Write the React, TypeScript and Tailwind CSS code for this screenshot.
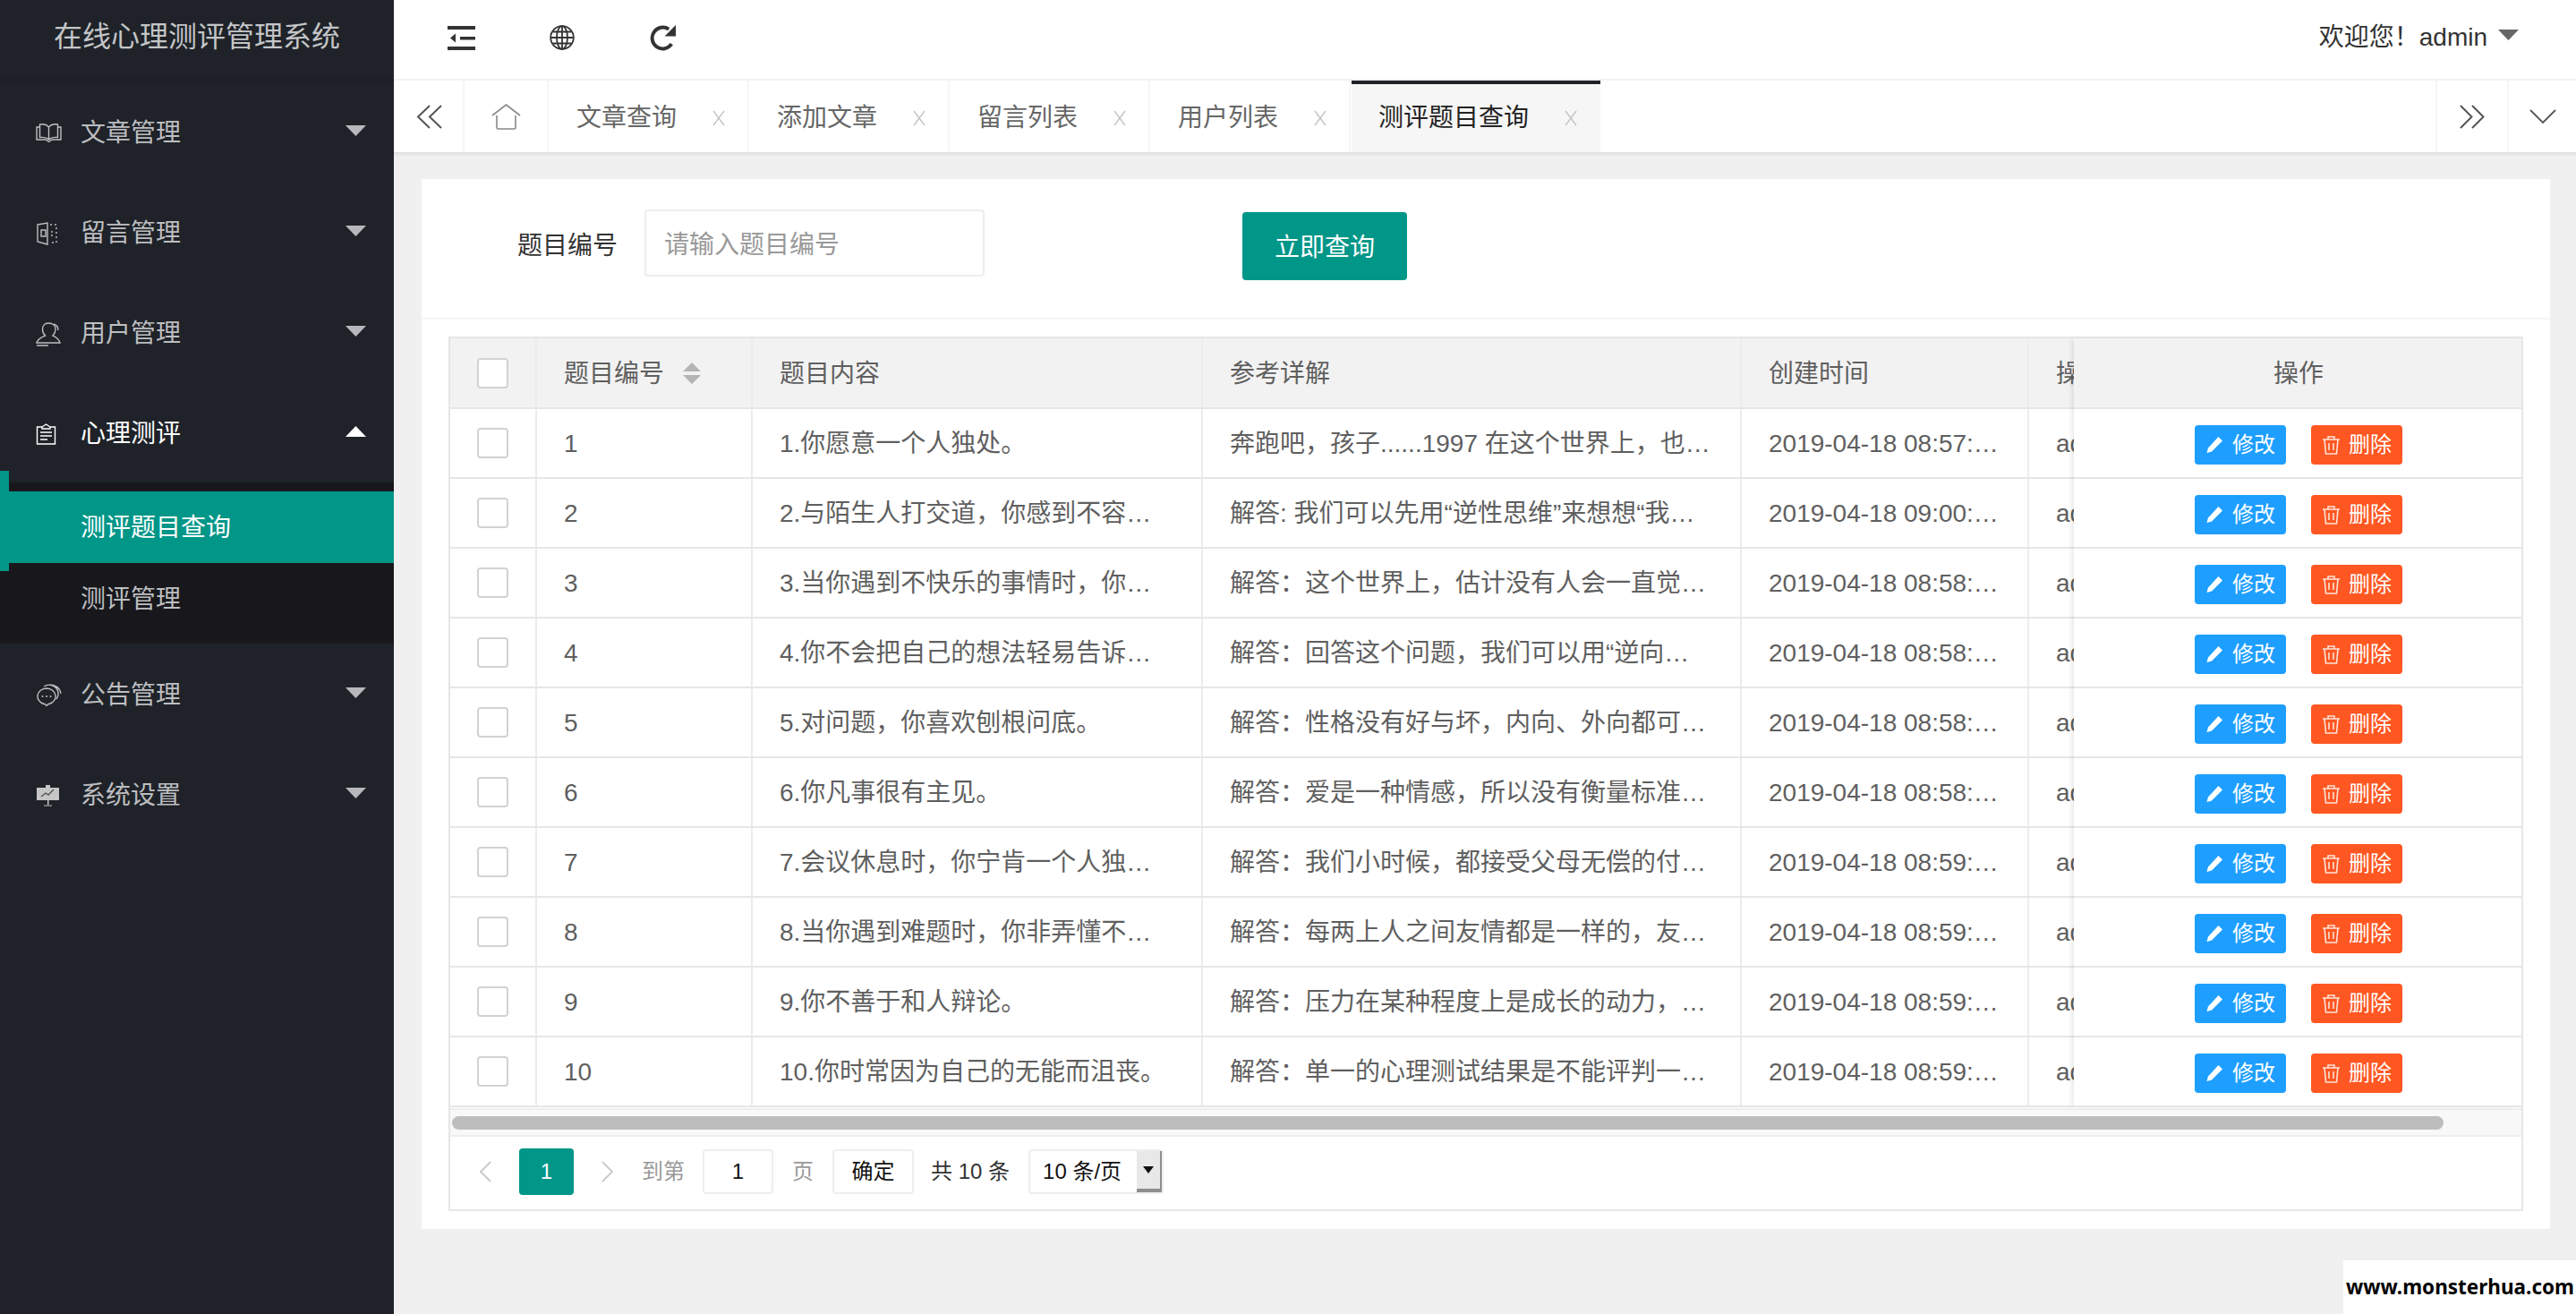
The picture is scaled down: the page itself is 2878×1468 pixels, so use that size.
import type { ReactNode } from "react";

const rows = [
  { id: "1", title: "1.你愿意一个人独处。", detail: "奔跑吧，孩子......1997 在这个世界上，也许我们都曾经迷茫过", time: "2019-04-18 08:57:12" },
  { id: "2", title: "2.与陌生人打交道，你感到不容易吗，请选择", detail: "解答: 我们可以先用“逆性思维”来想想“我们为什么会这样”", time: "2019-04-18 09:00:12" },
  { id: "3", title: "3.当你遇到不快乐的事情时，你会怎么做呢", detail: "解答：这个世界上，估计没有人会一直觉得快乐吧", time: "2019-04-18 08:58:12" },
  { id: "4", title: "4.你不会把自己的想法轻易告诉别人的吧", detail: "解答：回答这个问题，我们可以用“逆向思维”来想一想", time: "2019-04-18 08:58:22" },
  { id: "5", title: "5.对问题，你喜欢刨根问底。", detail: "解答：性格没有好与坏，内向、外向都可以成功的吧", time: "2019-04-18 08:58:32" },
  { id: "6", title: "6.你凡事很有主见。", detail: "解答：爱是一种情感，所以没有衡量标准的，请记住", time: "2019-04-18 08:58:42" },
  { id: "7", title: "7.会议休息时，你宁肯一个人独处也不愿意", detail: "解答：我们小时候，都接受父母无偿的付出和关爱", time: "2019-04-18 08:59:02" },
  { id: "8", title: "8.当你遇到难题时，你非弄懂不可的吧对吗", detail: "解答：每两上人之间友情都是一样的，友情是相互的", time: "2019-04-18 08:59:12" },
  { id: "9", title: "9.你不善于和人辩论。", detail: "解答：压力在某种程度上是成长的动力，所以不要害怕", time: "2019-04-18 08:59:22" },
  { id: "10", title: "10.你时常因为自己的无能而沮丧。", detail: "解答：单一的心理测试结果是不能评判一个人的全部", time: "2019-04-18 08:59:32" },
];

const BookIcon = () => (
  <svg width="29" height="23" viewBox="0 0 29 23" fill="none" stroke="currentColor" strokeWidth="1.4">
    <path d="M14.5 5C12 2 8 1.5 4.5 2v14.5c4-.5 7.5 0 10 2.5 2.500-2.500 6-3 10-2.500V2c-3.500-.5-7.500 0-10 3zM14.500 5v14" />
    <path d="M4.500 5H1v14h10l3.500 2.500L18 19h10V5h-3.500" />
  </svg>
);

const DoorIcon = () => (
  <svg width="25" height="26" viewBox="0 0 25 26" fill="none" stroke="currentColor" strokeWidth="1.4">
    <path d="M2 3l11 -2v24l-11-3z" />
    <path d="M6 9h5v7H6z" />
    <path d="M16 3h7v20h-7" strokeDasharray="2 3" />
    <path d="M18 10v7" strokeDasharray="2 2" />
  </svg>
);

const UserIcon = () => (
  <svg width="29" height="28" viewBox="0 0 29 28" fill="none" stroke="currentColor" strokeWidth="1.4">
    <path d="M14 2c-4 0-6.500 3-6.500 7 0 3 1.500 5.500 3 7-3 1.500-8 3-9.500 8h26c-1.500-5-5-6.500-8-8 1.500-1.500 3-4 3-7 0-4-3-7-8-7z" />
    <path d="M20 3c3 1 5 4 5 7M1 27h13" />
  </svg>
);

const ClipboardIcon = () => (
  <svg width="23" height="24" viewBox="0 0 23 24" fill="none" stroke="currentColor" strokeWidth="1.4">
    <path d="M7 4H1.500v19h20V4H16" />
    <path d="M7 6V4l4.500-3L16 4v2z" />
    <path d="M5 10h13M5 14h13M5 18h8" />
  </svg>
);

const ChatIcon = () => (
  <svg width="29" height="25" viewBox="0 0 29 25" fill="none" stroke="currentColor" strokeWidth="1.4">
    <path d="M12 5a10.500 9 0 0 0-3 17.500h1l2 2 2-2h1A10.500 9 0 0 0 12 5z" />
    <path d="M9 3c6-4 15-1 16 7 .5 3-.5 5-2 7M16 1c5 0 11 3 12 10" />
    <circle cx="7.500" cy="14" r="1" fill="currentColor" stroke="none" />
    <circle cx="12" cy="14" r="1" fill="currentColor" stroke="none" />
    <circle cx="16.500" cy="14" r="1" fill="currentColor" stroke="none" />
  </svg>
);

const BoardIcon = () => (
  <svg width="27" height="25" viewBox="0 0 27 25">
    <path d="M1 4h25v14H1z" fill="#c6c6c6" />
    <path d="M6 14l5-4 3 2 6-6" fill="none" stroke="#555" strokeWidth="1.400" />
    <path d="M11 1h5v3h-5zM13 18h1.500v5H13zM9 23.500h9v1H9z" fill="#c6c6c6" />
  </svg>
);

function Caret({ up, className }: { up?: boolean; className: string }) {
  return (
    <svg width="23" height="12" viewBox="0 0 23 12" className={className}>
      <path d={up ? "M11.500 0L23 12H0z" : "M0 0h23L11.500 12z"} fill="currentColor" />
    </svg>
  );
}

function MenuItem({ icon, label, open }: { icon: ReactNode; label: string; open?: boolean }) {
  return (
    <div className={`flex h-[112px] items-center pl-[40px] pt-[3px] text-[28px] ${open ? "text-white" : "text-[#bdbec0]"}`}>
      <span className="flex w-[50px] items-center">{icon}</span>
      <span>{label}</span>
      <Caret up={open} className={`ml-auto mr-[31px] -mt-[5px] ${open ? "text-white" : "text-[#b8b8bc]"}`} />
    </div>
  );
}

function Sidebar() {
  return (
    <aside className="relative w-[440px] shrink-0 bg-[#1f2329]">
      <div className="flex h-[91px] items-center justify-center border-b-[3px] border-[#1c1f24] pb-[6px] text-[32px] text-[#c4c5c7]">
        在线心理测评管理系统
      </div>
      <MenuItem icon={<BookIcon />} label="文章管理" />
      <MenuItem icon={<DoorIcon />} label="留言管理" />
      <MenuItem icon={<UserIcon />} label="用户管理" />
      <MenuItem icon={<ClipboardIcon />} label="心理测评" open />
      <div className="bg-[#18181c] py-[10px] text-[28px]">
        <div className="flex h-[80px] items-center bg-[#009688] pl-[90px] pt-[2px] text-white">测评题目查询</div>
        <div className="flex h-[80px] items-center pl-[90px] pt-[2px] text-[#bdbec0]">测评管理</div>
      </div>
      <MenuItem icon={<ChatIcon />} label="公告管理" />
      <MenuItem icon={<BoardIcon />} label="系统设置" />
      <div className="absolute left-0 top-[526px] h-[112px] w-[10px] bg-[#009688]" />
    </aside>
  );
}

function TopBar() {
  return (
    <header className="flex h-[90px] shrink-0 items-center border-b-2 border-[#f2f2f2] bg-white pb-[4px] pl-[60px] pr-[64px] text-[#333]">
      <svg width="32" height="27" viewBox="0 0 32 27" fill="#333">
        <rect x="0" y="0" width="31" height="4" />
        <rect x="14" y="12" width="17" height="3.500" />
        <rect x="0" y="23" width="31" height="4" />
        <path d="M9 8.500v10l-6-5z" />
      </svg>
      <svg className="ml-[82px]" width="28" height="28" viewBox="0 0 28 28" fill="none" stroke="#333" strokeWidth="1.800">
        <circle cx="14" cy="14" r="12.800" />
        <ellipse cx="14" cy="14" rx="6" ry="12.800" />
        <path d="M14 1v26M1.500 14h25M3.500 7.500h21M3.500 20.500h21" />
      </svg>
      <svg className="ml-[84px]" width="29" height="29" viewBox="0 0 28 28" fill="none">
        <path d="M23.500 20.500A11.500 11.500 0 1 1 20.500 4.500" stroke="#333" strokeWidth="3.800" />
        <path d="M28 0v12H16z" fill="#333" />
      </svg>
      <div className="ml-auto flex items-center text-[28px]">
        <span>欢迎您！admin</span>
        <Caret className="ml-[12px] -mt-[6px] text-[#666]" />
      </div>
    </header>
  );
}

function CloseX() {
  return (
    <svg width="18" height="18" viewBox="0 0 18 18" fill="none" stroke="#c2c2c2" strokeWidth="1.300">
      <path d="M3 1l12 16M15 1L3 17" />
    </svg>
  );
}

function Tab({ label, active }: { label: string; active?: boolean }) {
  if (active) {
    return (
      <div className="ml-[1px] flex w-[278px] items-center border-t-[4px] border-[#20222a] bg-[#f6f6f6] pl-[30px] text-[#222]">
        <span>{label}</span>
        <span className="ml-[38px] flex"><CloseX /></span>
      </div>
    );
  }
  return (
    <div className="flex w-[224px] items-center border-r-2 border-[#f6f6f6] pl-[31px] pt-[3px] text-[#666]">
      <span>{label}</span>
      <span className="ml-[38px] flex"><CloseX /></span>
    </div>
  );
}

function TabBar() {
  return (
    <div className="flex h-[82px] shrink-0 border-b-2 border-[#e2e2e2] bg-white text-[28px] shadow-[0_2px_2px_rgba(0,0,0,0.04)]">
      <div className="flex w-[79px] items-center justify-center border-r-2 border-[#f6f6f6] pl-[2px]">
        <svg width="30" height="27" viewBox="0 0 30 27" fill="none" stroke="#555" strokeWidth="2">
          <path d="M15 1L2 13.500 15 26M28 1L15 13.500 28 26" />
        </svg>
      </div>
      <div className="flex w-[94px] items-center justify-center border-r-2 border-[#f6f6f6]">
        <svg width="33" height="29" viewBox="0 0 33 29" fill="none" stroke="#888" strokeWidth="1.600">
          <path d="M1 13L16.500 1 32 13" />
          <path d="M6 13v13.500c0 1 .5 1.500 1.500 1.500h18c1 0 1.500-.5 1.500-1.500V13" />
        </svg>
      </div>
      <Tab label="文章查询" />
      <Tab label="添加文章" />
      <Tab label="留言列表" />
      <Tab label="用户列表" />
      <Tab label="测评题目查询" active />
      <div className="ml-auto flex w-[80px] items-center justify-center border-l-2 border-[#f6f6f6]">
        <svg width="28" height="27" viewBox="0 0 28 27" fill="none" stroke="#555" strokeWidth="2">
          <path d="M1 1l12.500 12.500L1 26M14 1l12.500 12.500L14 26" />
        </svg>
      </div>
      <div className="flex w-[77px] items-center justify-center border-l-2 border-[#f6f6f6]">
        <svg width="30" height="16" viewBox="0 0 30 16" fill="none" stroke="#555" strokeWidth="1.800">
          <path d="M1 1l14 14L29 1" />
        </svg>
      </div>
    </div>
  );
}

function Checkbox() {
  return <div className="h-[34px] w-[35px] rounded-[4px] border-2 border-[#d2d2d2] bg-white" />;
}

const gridCols = "grid grid-cols-[97px_241px_503px_602px_321px_1fr]";
const cell = "flex items-center overflow-hidden border-r-2 border-[#ececec] px-[30px]";

function SortIcon() {
  return (
    <svg className="ml-[21px] shrink-0" width="20" height="24" viewBox="0 0 20 24" fill="#b4b4b4">
      <path d="M10 0l10 10H0zM0 14h20L10 24z" />
    </svg>
  );
}

function EditButton() {
  return (
    <div className="flex h-[44px] w-[102px] items-center justify-center gap-[10px] rounded-[4px] bg-[#1e9fff] text-[24px] text-white">
      <svg width="20" height="20" viewBox="0 0 20 20" fill="#fff">
        <path d="M14.500 1l4.500 4.500L7 17.500l-5.500 1.500L3 13.500z" />
      </svg>
      <span>修改</span>
    </div>
  );
}

function DeleteButton() {
  return (
    <div className="flex h-[44px] w-[102px] items-center justify-center gap-[9px] rounded-[4px] bg-[#ff5722] text-[24px] text-white">
      <svg width="21" height="22" viewBox="0 0 21 22" fill="none" stroke="#ffe3d8" strokeWidth="1.600">
        <path d="M1 5h19M7 5V2h7v3M3 5l1.500 16h12L18 5M8 9v8M13 9v8" />
      </svg>
      <span>删除</span>
    </div>
  );
}

function DataTable() {
  return (
    <div className="relative border-x-2 border-[#e6e6e6] border-t-0">
      <div className={`${gridCols} h-[79px] border-b-2 border-[#e6e6e6] bg-[#f2f2f2] text-[#5f5f5f]`}>
        <div className={`${cell} justify-center px-0`}><Checkbox /></div>
        <div className={cell}><span className="pt-[2px]">题目编号</span><SortIcon /></div>
        <div className={cell}><span className="pt-[2px]">题目内容</span></div>
        <div className={cell}><span className="pt-[2px]">参考详解</span></div>
        <div className={cell}><span className="pt-[2px]">创建时间</span></div>
        <div className="flex items-center pl-[30px] pt-[2px]">操作人</div>
      </div>
      {rows.map((r) => (
        <div key={r.id} className={`${gridCols} h-[78px] border-b-2 border-[#e6e6e6] bg-white text-[#5f5f5f]`}>
          <div className={`${cell} justify-center px-0`}><Checkbox /></div>
          <div className={cell}><span className="pt-[2px]">{r.id}</span></div>
          <div className={cell}><span className="truncate pt-[2px]">{r.title}</span></div>
          <div className={cell}><span className="truncate pt-[2px]">{r.detail}</span></div>
          <div className={cell}><span className="truncate pt-[2px]">{r.time}</span></div>
          <div className="flex items-center pl-[30px] pt-[2px]">admin</div>
        </div>
      ))}
      {/* fixed action column sits on top of the scrolling columns */}
      <div className="absolute right-0 top-0 w-[500px] bg-white shadow-[-4px_0_6px_-2px_rgba(0,0,0,0.1)]">
        <div className="flex h-[79px] items-center justify-center border-b-2 border-[#e6e6e6] bg-[#f2f2f2] pl-[2px] pt-[2px] text-[#5f5f5f]">操作</div>
        {rows.map((r) => (
          <div key={r.id} className="flex h-[78px] items-center justify-center gap-[28px] border-b-2 border-[#e6e6e6] pl-[2px] pt-[4px]">
            <EditButton />
            <DeleteButton />
          </div>
        ))}
      </div>
      <div className="mt-[1px] flex h-[32px] items-center border-y-2 border-[#eeeeee] bg-[#f8f8f8] pl-[2px]">
        <div className="h-[15px] w-[2225px] rounded-full bg-[#bdbdbd]" />
      </div>
    </div>
  );
}

function Pagination() {
  return (
    <div className="flex h-[83px] items-center border-x-2 border-b-2 border-[#e6e6e6] pb-[4px] text-[24px] text-[#333]">
      <svg className="ml-[32px]" width="14" height="24" viewBox="0 0 14 24" fill="none" stroke="#c8c8c8" strokeWidth="1.800">
        <path d="M13 1L2 12l11 11" />
      </svg>
      <div className="ml-[31px] flex h-[52px] w-[61px] items-center justify-center rounded-[4px] bg-[#009688] text-white">1</div>
      <svg className="ml-[31px]" width="14" height="24" viewBox="0 0 14 24" fill="none" stroke="#c8c8c8" strokeWidth="1.800">
        <path d="M1 1l11 11L1 23" />
      </svg>
      <span className="ml-[31px] text-[#999]">到第</span>
      <div className="ml-[20px] flex h-[50px] w-[79px] items-center justify-center rounded-[4px] border-2 border-[#eeeeee] text-[#111]">1</div>
      <span className="ml-[21px] text-[#999]">页</span>
      <div className="ml-[21px] flex h-[50px] w-[91px] items-center justify-center rounded-[4px] border-2 border-[#eeeeee] text-[#111]">确定</div>
      <span className="ml-[19px] text-[#333]">共 10 条</span>
      <div className="ml-[21px] flex h-[50px] w-[151px] items-center rounded-[4px] border-2 border-[#eeeeee] pl-[14px] text-[#111]">
        <span className="whitespace-nowrap">10 条/页</span>
        <div className="ml-auto flex h-full w-[28px] shrink-0 items-center justify-center border-b-[4px] border-r-2 border-[#8e8e8e] bg-[#e8e8e8]">
          <svg width="12" height="8" viewBox="0 0 12 8"><path d="M0 0h12L6 8z" fill="#111" /></svg>
        </div>
      </div>
    </div>
  );
}

export default function App() {
  return (
    <div className="relative flex h-[1468px] w-[2878px] overflow-hidden bg-[#f0f0f0] font-['Liberation_Sans','Noto_Sans_CJK_SC',sans-serif] text-[28px]">
      <Sidebar />
      <main className="flex min-w-0 flex-1 flex-col">
        <TopBar />
        <TabBar />
        <section className="ml-[31px] mr-[29px] mt-[28px] h-[1173px] bg-white">
          <div className="flex h-[157px] items-start border-b-2 border-[#f6f6f6] pl-[107px] pt-[34px]">
            <label className="mt-[20px] w-[112px] text-[#333]">题目编号</label>
            <input
              readOnly
              placeholder="请输入题目编号"
              className="ml-[30px] h-[75px] w-[380px] rounded-[4px] border-2 border-[#eeeeee] bg-white px-[20px] pt-[5px] text-[28px] outline-none placeholder:text-[#999]"
            />
            <button className="ml-[288px] mt-[3px] h-[76px] w-[184px] rounded-[4px] bg-[#009688] pt-[3px] text-[28px] text-white">立即查询</button>
          </div>
          <div className="mx-[30px] mt-[19px] border-t-2 border-[#e6e6e6]">
            <DataTable />
            <Pagination />
          </div>
        </section>
      </main>
      <div className="absolute bottom-0 right-0 flex h-[60px] w-[260px] items-center justify-end bg-white pr-[2px] font-['Noto_Sans',sans-serif] text-[22.5px] font-bold text-black">
        www.monsterhua.com
      </div>
    </div>
  );
}
